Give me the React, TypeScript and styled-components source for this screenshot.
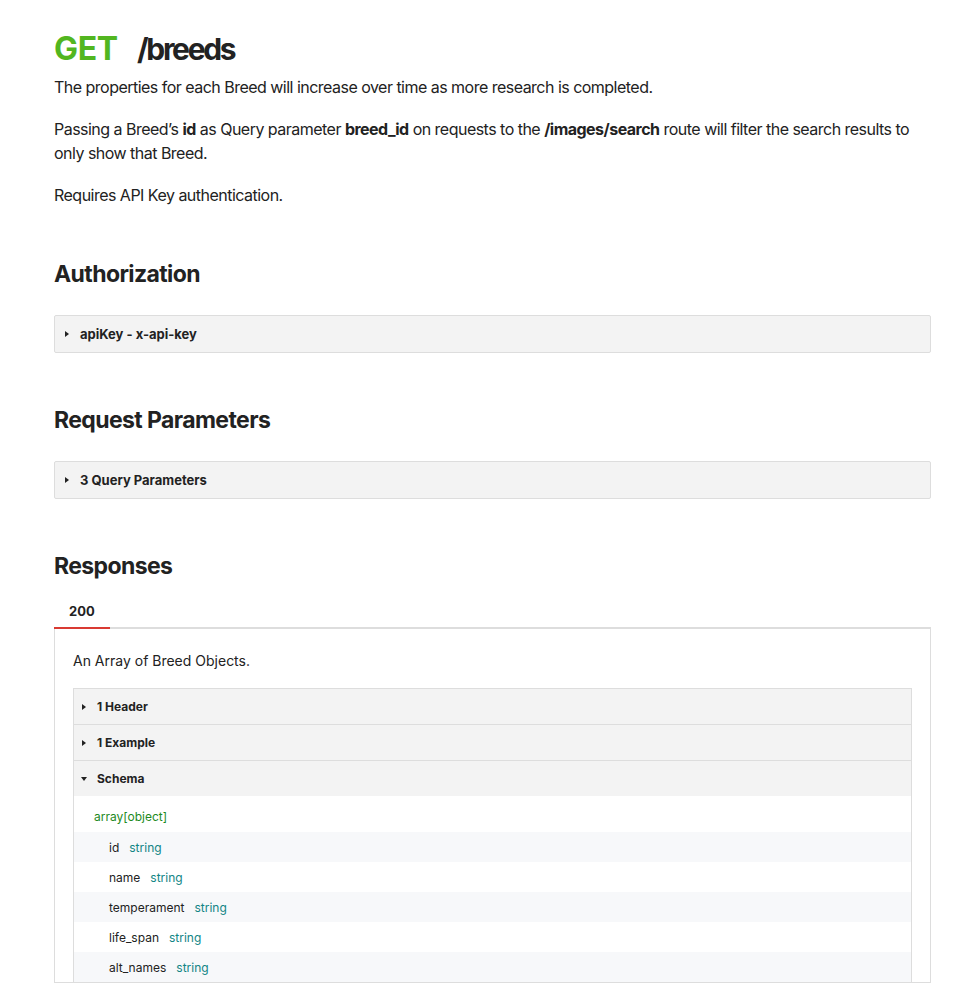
import React from 'react';
import styled, { createGlobalStyle } from 'styled-components';

const GlobalStyle = createGlobalStyle`
  body {
    margin: 0;
    background: #fff;
    font-family: Inter, "Noto Sans", "Liberation Sans", sans-serif;
    color: #222;
  }
`;

const schemaFields = ['id', 'name', 'temperament', 'life_span', 'alt_names'];

export default function App() {
  return (
    <Page>
      <GlobalStyle />
      <Title>
        <Method>GET</Method>
        <PathName>/breeds</PathName>
      </Title>
      <Para>The properties for each Breed will increase over time as more research is completed.</Para>
      <Para>
        Passing a Breed’s <b>id</b> as Query parameter <b>breed_id</b> on requests to the{' '}
        <b>/images/search</b> route will filter the search results to only show that Breed.
      </Para>
      <Para>Requires API Key authentication.</Para>

      <SectionTitle>Authorization</SectionTitle>
      <Collapsible>
        <Caret />
        apiKey - x-api-key
      </Collapsible>

      <SectionTitle>Request Parameters</SectionTitle>
      <Collapsible>
        <Caret />
        3 Query Parameters
      </Collapsible>

      <SectionTitle>Responses</SectionTitle>
      <TabList>
        <Tab $active>200</Tab>
      </TabList>
      <Panel>
        <PanelText>An Array of Breed Objects.</PanelText>
        <Inner>
          <InnerRow>
            <Caret />
            1 Header
          </InnerRow>
          <InnerRow>
            <Caret />
            1 Example
          </InnerRow>
          <InnerRow>
            <Caret $open />
            Schema
          </InnerRow>
          <Schema>
            <SchemaRoot>array[object]</SchemaRoot>
            {schemaFields.map((f, i) => (
              <Field key={f} $striped={i % 2 === 0}>
                <FieldName>{f}</FieldName>
                <FieldType>string</FieldType>
              </Field>
            ))}
          </Schema>
        </Inner>
      </Panel>
    </Page>
  );
}

const Page = styled.div`
  width: 877px;
  margin-left: 54px;
  padding-top: 30px;
`;

const Title = styled.h1`
  display: flex;
  align-items: baseline;
  gap: 19px;
  margin: 0 0 7px;
  font-size: 32px;
  line-height: 38px;
  font-weight: 700;
`;

const Method = styled.span`
  color: #52b61f;
  letter-spacing: -0.3px;
`;

const PathName = styled.span`
  color: #222;
  font-size: 30px;
  letter-spacing: -2.3px;
`;

const Para = styled.p`
  margin: 0 0 18px;
  font-size: 16px;
  line-height: 24px;
  letter-spacing: -0.52px;
  color: #222;

  b {
    font-weight: 700;
  }
`;

const SectionTitle = styled.h2`
  margin: 52px 0 26px;
  font-size: 23px;
  line-height: 30px;
  font-weight: 700;
  letter-spacing: -0.6px;
  color: #222;
`;

const Caret = styled.span<{ $open?: boolean }>`
  display: inline-flex;
  justify-content: center;
  flex: 0 0 8px;
  margin-right: 9px;

  &::before {
    content: '';
    width: 0;
    height: 0;
    ${(p) =>
      p.$open
        ? `border-left: 3.5px solid transparent;
           border-right: 3.5px solid transparent;
           border-top: 4px solid #222;`
        : `border-top: 3.5px solid transparent;
           border-bottom: 3.5px solid transparent;
           border-left: 4px solid #222;`}
  }
`;

const Collapsible = styled.div`
  display: flex;
  align-items: center;
  height: 36px;
  padding: 0 8px;
  background: #f3f3f3;
  border: 1px solid #ddd;
  border-radius: 2px;
  font-size: 13px;
  font-weight: 700;
  color: #222;
`;

const TabList = styled.div`
  display: flex;
  margin-top: -13px;
  border-bottom: 2px solid #ddd;
`;

const Tab = styled.div<{ $active?: boolean }>`
  padding: 9px 15px 8px;
  line-height: 16px;
  font-size: 13px;
  font-weight: 700;
  color: #222;
  margin-bottom: -2px;
  border-bottom: 2px solid ${(p) => (p.$active ? '#d93a32' : 'transparent')};
`;

const Panel = styled.div`
  border: 1px solid #ddd;
  border-top: none;
  padding: 22px 18px 0;
`;

const PanelText = styled.p`
  margin: 0 0 17px;
  font-size: 14px;
  line-height: 20px;
  color: #222;
`;

const Inner = styled.div`
  border: 1px solid #ddd;
  border-bottom: none;
`;

const InnerRow = styled.div`
  display: flex;
  align-items: center;
  height: 35px;
  padding: 0 6px;
  background: #f3f3f3;
  font-size: 12px;
  font-weight: 700;
  color: #222;

  & + & {
    border-top: 1px solid #ddd;
  }
`;

const Schema = styled.div`
  background: #fff;
  font-size: 12px;
`;

const SchemaRoot = styled.div`
  padding: 13px 20px 7px;
  line-height: 16px;
  color: #1e8a1e;
`;

const Field = styled.div<{ $striped: boolean }>`
  display: flex;
  align-items: center;
  gap: 10px;
  height: 30px;
  padding-left: 35px;
  background: ${(p) => (p.$striped ? '#f7f8fa' : '#fff')};
`;

const FieldName = styled.span`
  color: #222;
`;

const FieldType = styled.span`
  color: #128585;
`;
